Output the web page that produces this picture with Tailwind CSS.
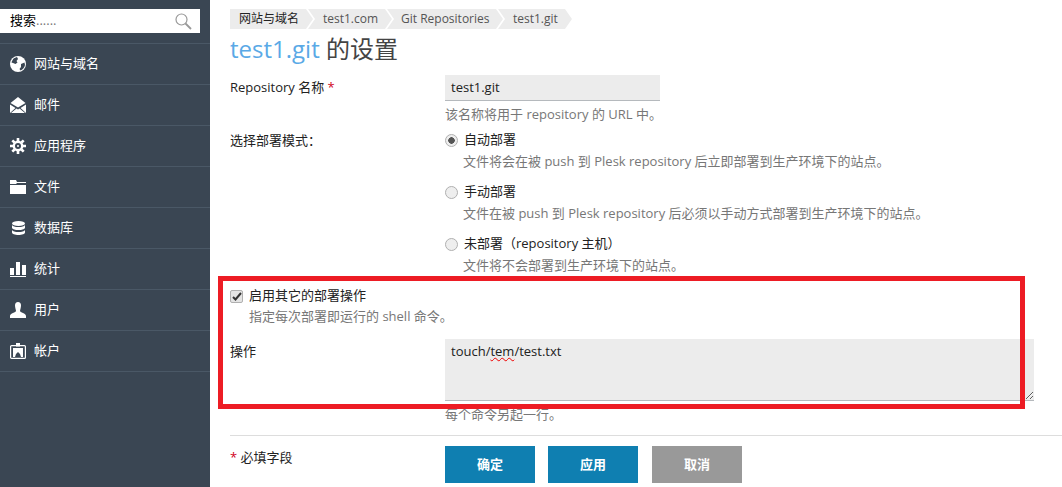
<!DOCTYPE html>
<html lang="zh">
<head>
    <meta charset="UTF-8">
    <title>test1.git 的设置</title>
    <script src="https://cdn.jsdelivr.net/npm/@tailwindcss/browser@4"></script>
</head>
<body class="relative w-[1062px] h-[487px] overflow-hidden bg-white flex font-['Open_Sans','Noto_Sans_CJK_SC',sans-serif] text-[13px] text-[#222]">
    <!-- Sidebar -->
    <aside class="w-[210px] h-full shrink-0 bg-[#3a4653] text-white">
        <div class="h-[44px] pt-[9px] border-b border-[#4a5866]">
            <div class="w-[200px] h-[24px] bg-white flex items-center justify-between pl-[10px] pr-[8px] text-black">
                <span>搜索<span class="text-[#777]">......</span></span>
                <svg width="17" height="17" viewBox="0 0 17 17" fill="none" stroke="#999" stroke-width="1.2"><circle cx="6.5" cy="6.5" r="5.5"/><path d="M10.5 10.5l5.5 5.5" stroke-width="1.8"/></svg>
            </div>
        </div>
        <nav>
            <a class="h-[41px] flex items-center border-b border-[#4a5866] pl-[10px] gap-[8px]"><span class="w-[16px] flex justify-center"><svg width="16" height="16" viewBox="0 0 16 16"><circle cx="8" cy="8" r="8" fill="#fff"/><path d="M4 2.200L7 1 8 3 6.500 5 7.500 6.500 5.500 8 3 7 1.500 6.500C2 4.800 2.800 3.200 4 2.200zM11 8l3.500-1.500.5 2.500c-.5 2.500-2 4.500-4.500 5.500L9.500 13 11 11z" fill="#3a4653"/></svg></span><span>网站与域名</span></a>
            <a class="h-[41px] flex items-center border-b border-[#4a5866] pl-[10px] gap-[8px]"><span class="w-[16px] flex justify-center"><svg width="16" height="16" viewBox="0 0 16 16" fill="#fff"><path d="M8 0L.5 6 8 10.5 15.500 6zM0 7.500V16l5.500-5zM16 7.500V16l-5.500-5zM6.500 11.500L1 16h14l-5.500-4.500L8 12.500z"/></svg></span><span>邮件</span></a>
            <a class="h-[41px] flex items-center border-b border-[#4a5866] pl-[10px] gap-[8px]"><span class="w-[16px] flex justify-center"><svg width="16" height="16" viewBox="0 0 16 16" fill="none" stroke="#fff"><circle cx="8" cy="8" r="4.200" stroke-width="2.400"/><circle cx="8" cy="8" r="1" fill="#fff" stroke="none"/><path d="M8 0v3M8 13v3M0 8h3M13 8h3M2.300 2.300l2.200 2.200M11.500 11.500l2.200 2.200M13.700 2.300l-2.200 2.200M4.500 11.500l-2.200 2.200" stroke-width="2.600"/></svg></span><span>应用程序</span></a>
            <a class="h-[41px] flex items-center border-b border-[#4a5866] pl-[10px] gap-[8px]"><span class="w-[16px] flex justify-center"><svg width="16" height="14" viewBox="0 0 16 14" fill="#fff"><path d="M0 0h6l1 2h9v1H7L6 4H0zM0 5h16v9H0z"/></svg></span><span>文件</span></a>
            <a class="h-[41px] flex items-center border-b border-[#4a5866] pl-[10px] gap-[8px]"><span class="w-[16px] flex justify-center"><svg width="13" height="14" viewBox="0 0 13 14" fill="#fff"><ellipse cx="6.500" cy="2.500" rx="6.500" ry="2.500"/><path d="M0 4c1 1.500 3 2 6.500 2S12 5.500 13 4v3c-1 1.500-3 2-6.500 2S1 8.500 0 7zM0 9c1 1.500 3 2 6.500 2s5.500-.5 6.500-2v2.500C13 13 10 14 6.500 14S0 13 0 11.500z"/></svg></span><span>数据库</span></a>
            <a class="h-[41px] flex items-center border-b border-[#4a5866] pl-[10px] gap-[8px]"><span class="w-[16px] flex justify-center"><svg width="16" height="16" viewBox="0 0 16 16" fill="#fff"><path d="M0 7h4v7H0zM6 1h4v13H6zM12 4h4v10h-4zM0 15h16v1H0z"/></svg></span><span>统计</span></a>
            <a class="h-[41px] flex items-center border-b border-[#4a5866] pl-[10px] gap-[8px]"><span class="w-[16px] flex justify-center"><svg width="16" height="16" viewBox="0 0 16 16" fill="#fff"><path d="M8 0c2 0 3 1.500 3 3.500S10 8 10 9c0 1.500 6 2 6 5v2H0v-2c0-3 6-3.500 6-5 0-1-1-3.500-1-5.500S6 0 8 0z"/></svg></span><span>用户</span></a>
            <a class="h-[41px] flex items-center border-b border-[#4a5866] pl-[10px] gap-[8px]"><span class="w-[16px] flex justify-center"><svg width="16" height="16" viewBox="0 0 16 16" fill="none" stroke="#fff" stroke-width="1.200"><rect x=".6" y="2.600" width="14.800" height="12.800" rx="1"/><path d="M6 0h4v3.500H6z" fill="#fff" stroke="none"/><path d="M3 5h10v9h-2l-1-3-2-2-2 2-1 3H3z" fill="#fff" stroke="none"/></svg></span><span>帐户</span></a>
        </nav>
    </aside>

    <!-- Main content -->
    <main class="flex-1 pl-[20px] pt-[9px]">
        <div class="flex h-[20px] text-[12px] leading-[20px] text-[#555]">
            <span class="w-[83px] bg-[#ececec] text-[#222] pl-[9px] [clip-path:polygon(0_0,calc(100%-7px)_0,100%_50%,calc(100%-7px)_100%,0_100%)]">网站与域名</span>
            <span class="w-[84px] bg-[#ececec] -ml-[5px] pl-[15px] [clip-path:polygon(0_0,calc(100%-7px)_0,100%_50%,calc(100%-7px)_100%,0_100%,7px_50%)]">test1.com</span>
            <span class="w-[116px] bg-[#ececec] -ml-[5px] pl-[14px] [clip-path:polygon(0_0,calc(100%-7px)_0,100%_50%,calc(100%-7px)_100%,0_100%,7px_50%)]">Git Repositories</span>
            <span class="w-[74px] bg-[#ececec] -ml-[5px] pl-[15px] [clip-path:polygon(0_0,calc(100%-7px)_0,100%_50%,calc(100%-7px)_100%,0_100%,7px_50%)]">test1.git</span>
        </div>
        <h1 class="text-[24px] leading-[30px] mt-[5px] text-[#444]"><span class="text-[#5aa9e6]">test1.git</span> 的设置</h1>

        <div class="flex mt-[11px]">
            <div class="w-[215px] shrink-0 pt-[3px]">Repository 名称 <span class="text-[#d0021b]">*</span></div>
            <div>
                <div class="w-[215px] h-[26px] bg-[#ececec] border-b border-[#b5b9bd] pl-[6px] leading-[25px]">test1.git</div>
                <div class="text-[#777] mt-[4px] leading-[18px]">该名称将用于 repository 的 URL 中。</div>
            </div>
        </div>

        <div class="flex mt-[8px]">
            <div class="w-[215px] shrink-0 leading-[18px]">选择部署模式：</div>
            <div>
                <label class="flex items-center gap-[6px] h-[18px]"><span class="w-[13px] h-[13px] rounded-full border border-[#b0b0b0] bg-[radial-gradient(circle,#555_0,#555_3px,#eee_3.5px)]"></span><span>自动部署</span></label>
                <div class="text-[#777] leading-[18px] pl-[18px] mt-[3px]">文件将会在被 push 到 Plesk repository 后立即部署到生产环境下的站点。</div>
                <label class="flex items-center gap-[6px] h-[18px] mt-[13px]"><span class="w-[13px] h-[13px] rounded-full border border-[#b0b0b0] bg-[#eee]"></span><span>手动部署</span></label>
                <div class="text-[#777] leading-[18px] pl-[18px] mt-[3px]">文件在被 push 到 Plesk repository 后必须以手动方式部署到生产环境下的站点。</div>
                <label class="flex items-center gap-[6px] h-[18px] mt-[13px]"><span class="w-[13px] h-[13px] rounded-full border border-[#b0b0b0] bg-[#eee]"></span><span>未部署（repository 主机）</span></label>
                <div class="text-[#777] leading-[18px] pl-[18px] mt-[3px]">文件将不会部署到生产环境下的站点。</div>
            </div>
        </div>

        <label class="flex items-center gap-[6px] h-[18px] mt-[13px]"><span class="w-[13px] h-[13px] rounded-[2px] border border-[#b0b0b0] bg-[#e4e4e4] flex items-center justify-center"><svg width="10" height="9" viewBox="0 0 10 9" fill="none" stroke="#333" stroke-width="2"><path d="M1 5l2.500 2.500L9 1"/></svg></span><span>启用其它的部署操作</span></label>
        <div class="text-[#777] leading-[18px] pl-[19px] mt-[2px]">指定每次部署即运行的 shell 命令。</div>

        <div class="flex mt-[14px]">
            <div class="w-[215px] shrink-0 pt-[3px]">操作</div>
            <div>
                <div class="w-[589px] h-[62px] bg-[#ececec] border-b border-[#b5b9bd] px-[6px] py-[3px] resize overflow-auto">touch/<span class="underline decoration-wavy decoration-[#e00] decoration-1">tem</span>/test.txt</div>
                <div class="text-[#777] leading-[18px] mt-[4px]">每个命令另起一行。</div>
            </div>
        </div>

        <div class="flex border-t border-[#ddd] mt-[12px] pt-[10px]">
            <div class="w-[215px] shrink-0 pt-[2px]"><span class="text-[#d0021b]">*</span> 必填字段</div>
            <div class="flex font-bold text-white">
                <button class="w-[90px] h-[37px] bg-[#0f7fb1]">确定</button>
                <button class="w-[90px] h-[37px] bg-[#0f7fb1] ml-[13px]">应用</button>
                <button class="w-[90px] h-[37px] bg-[#999] ml-[14px]">取消</button>
            </div>
        </div>
    </main>

    <!-- Red annotation box drawn over the screenshot -->
    <div class="absolute left-[218px] top-[276px] w-[807px] h-[133px] border-[5px] border-[#ed1c24] pointer-events-none"></div>
</body>
</html>
